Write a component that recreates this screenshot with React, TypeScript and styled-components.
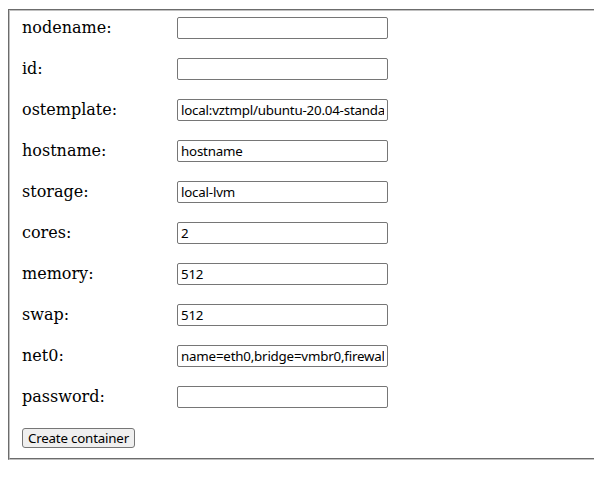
import React from "react";
import styled, { createGlobalStyle } from "styled-components";

const Global = createGlobalStyle`
  html, body { overflow-x: hidden; }
  body {
    margin: 9px 0 8px 8px;
    background: #ffffff;
    font-family: "DejaVu Serif", serif;
    font-size: 16px;
    color: #000000;
  }
`;

const Panel = styled.form`
  margin: 0;
  border-top: 2px groove rgb(192, 192, 192);
  border-left: 2px groove rgb(192, 192, 192);
  border-bottom: 2px groove rgb(192, 192, 192);
  border-right: 0;
  padding: 6px 12px 10px 12px;
`;

const Grid = styled.div`
  display: grid;
  grid-template-columns: 155px 211px;
  grid-auto-rows: 22px;
  row-gap: 19px;
  align-items: center;
`;

const Label = styled.label`
  font-family: "DejaVu Serif", serif;
  font-size: 16px;
  line-height: 22px;
  color: #000;
`;

const Input = styled.input`
  box-sizing: border-box;
  width: 211px;
  height: 22px;
  margin: 0;
  padding: 1px 3px;
  border: 1px solid #767676;
  border-radius: 2px;
  font-family: "Noto Sans", "DejaVu Sans", sans-serif;
  font-size: 13.33px;
  letter-spacing: -0.2px;
  color: #000;
  background: #fff;
  outline: none;
`;

const Button = styled.button`
  margin-top: 20px;
  box-sizing: border-box;
  height: 20px;
  padding: 0 5px;
  border: 1px solid #767676;
  border-radius: 3px;
  background: #efefef;
  font-family: "Noto Sans", "DejaVu Sans", sans-serif;
  font-size: 13.33px;
  letter-spacing: -0.2px;
  line-height: 16px;
  color: #000;
  display: block;
`;

const fields: [string, string][] = [
  ["nodename", ""],
  ["id", ""],
  ["ostemplate", "local:vztmpl/ubuntu-20.04-standard_20.04-1_amd64.tar.gz"],
  ["hostname", "hostname"],
  ["storage", "local-lvm"],
  ["cores", "2"],
  ["memory", "512"],
  ["swap", "512"],
  ["net0", "name=eth0,bridge=vmbr0,firewall=1,ip=dhcp"],
  ["password", ""],
];

export default function App() {
  return (
    <>
      <Global />
      <Panel onSubmit={(e) => e.preventDefault()}>
        <Grid>
          {fields.map(([name, value]) => (
            <React.Fragment key={name}>
              <Label htmlFor={name}>{name}:</Label>
              <Input
                id={name}
                type={name === "password" ? "password" : "text"}
                defaultValue={value}
              />
            </React.Fragment>
          ))}
        </Grid>
        <Button type="button">Create container</Button>
      </Panel>
    </>
  );
}
